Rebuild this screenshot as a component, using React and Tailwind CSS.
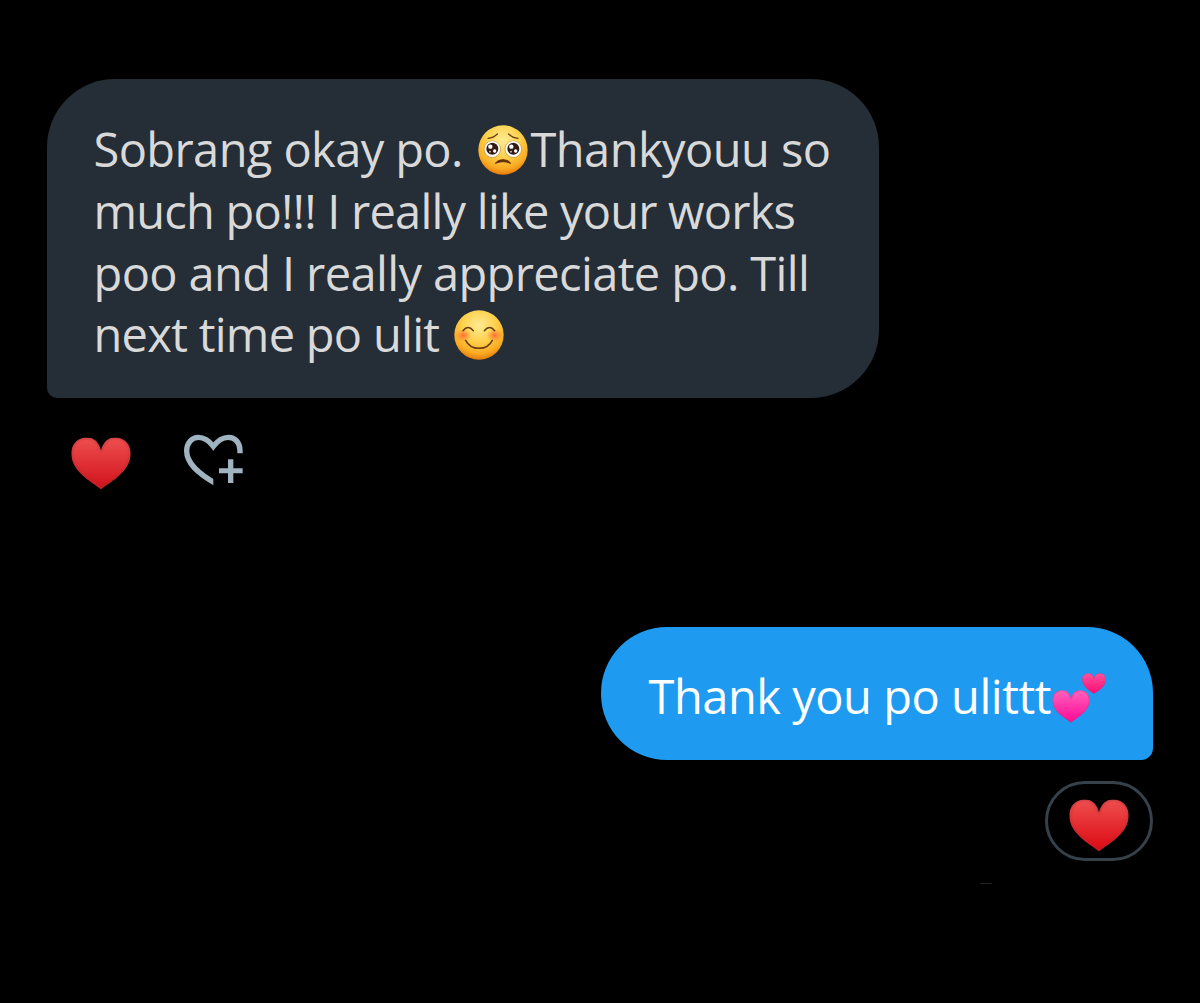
function Heart({ id, className, from, to, edge }) {
  return (
    <svg viewBox="0 0 180 158" className={className} aria-hidden="true">
      <defs>
        <linearGradient id={id} x1="0" y1="0" x2="0" y2="1">
          <stop offset="0" stopColor={from} />
          <stop offset="1" stopColor={to} />
        </linearGradient>
        <filter id={`${id}-soft`}>
          <feGaussianBlur stdDeviation="3" />
        </filter>
        <clipPath id={`${id}-clip`}>
          <path d="M90 157C72 138 1 108 1 48C1 21 21 1 47 1C69 1 84 15 90 40C96 15 111 1 133 1C159 1 179 21 179 48C179 108 108 138 90 157Z" />
        </clipPath>
      </defs>
      <g clipPath={`url(#${id}-clip)`}>
        <rect width="180" height="158" fill={`url(#${id})`} />
        <path
          d="M90 157C72 138 1 108 1 48C1 21 21 1 47 1C69 1 84 15 90 40C96 15 111 1 133 1C159 1 179 21 179 48C179 108 108 138 90 157Z"
          fill="none"
          stroke={edge}
          strokeWidth="7"
          opacity=".55"
          filter={`url(#${id}-soft)`}
        />
      </g>
    </svg>
  );
}

function FaceBase({ id }) {
  return (
    <>
      <defs>
        <radialGradient id={id} cx=".5" cy=".3" r=".7">
          <stop offset="0" stopColor="#ffeb94" />
          <stop offset=".5" stopColor="#fdd04a" />
          <stop offset=".82" stopColor="#f9aa22" />
          <stop offset="1" stopColor="#e67c0c" />
        </radialGradient>
        <radialGradient id={`${id}-blush`}>
          <stop offset="0" stopColor="#ff6a32" stopOpacity=".95" />
          <stop offset="1" stopColor="#ff7a32" stopOpacity="0" />
        </radialGradient>
      </defs>
      <circle cx="75" cy="75" r="74" fill={`url(#${id})`} />
    </>
  );
}

function PleadingFace({ className }) {
  return (
    <svg viewBox="0 0 150 150" className={className} aria-hidden="true">
      <FaceBase id="pleading" />
      <g fill="none" stroke="#65380f" strokeLinecap="round" strokeWidth="4">
        <path d="M30 40Q46 39 58 27" />
        <path d="M92 27Q104 39 120 40" />
      </g>
      {[43, 106].map((cx) => (
        <g key={cx}>
          <circle cx={cx} cy="73" r="25" fill="#f5dfa8" stroke="#b87b20" strokeWidth="1.5" />
          <circle cx={cx} cy="72" r="23" fill="#fff" />
          <circle cx={cx} cy="71" r="18" fill="#321b14" />
          <circle cx={cx - 6} cy="65" r="6.5" fill="#fff" />
          <circle cx={cx + 7} cy="78" r="5" fill="#fff" />
          <circle cx={cx - 7} cy="80" r="2.5" fill="#e5d5c9" />
        </g>
      ))}
      <path d="M52 115Q58 104 75 104Q92 104 98 115Q85 110 75 110Q65 110 52 115Z" fill="#65300d" stroke="#65300d" strokeWidth="3" strokeLinejoin="round" />
    </svg>
  );
}

function SmilingFace({ className }) {
  return (
    <svg viewBox="0 0 150 150" className={className} aria-hidden="true">
      <FaceBase id="smiling" />
      <ellipse cx="28" cy="76" rx="25" ry="20" fill="url(#smiling-blush)" />
      <ellipse cx="122" cy="76" rx="25" ry="20" fill="url(#smiling-blush)" />
      <g fill="none" stroke="#65380f" strokeLinecap="round" strokeWidth="4.5">
        <path d="M27 62Q42 43 58 62" />
        <path d="M91 62Q107 43 122 62" />
        <path d="M35 91Q47 115 75 115Q103 115 115 91" />
      </g>
    </svg>
  );
}

function AddReactionIcon({ className }) {
  return (
    <svg viewBox="0 0 177 156" className={className} aria-hidden="true">
      <clipPath id="heart-cut">
        <path d="M0 0H177V70H88V156H0Z" />
      </clipPath>
      <path
        d="M168 58V50C168 25 153 10 133 10C114 10 100 21 88 37C76 21 62 10 43 10C23 10 8 27 8 51C8 86 38 116 98 150"
        fill="none"
        stroke="#9fb3c1"
        strokeWidth="16"
        clipPath="url(#heart-cut)"
      />
      <path d="M105 103H132V76H148V103H176V118H148V147H132V118H105Z" fill="#9fb3c1" />
    </svg>
  );
}

function IncomingMessage() {
  return (
    <div className="mt-[79px] ml-[47px] h-[319px] w-[832px] rounded-[68px] rounded-bl-[10px] bg-[#252e36] pt-[40px] pl-[46.5px] text-[47px] leading-[61.8px] whitespace-pre text-[#d9d9d9]">
      <div className="flex h-[61.8px] items-center">
        <span className="w-[384px] tracking-[-0.6px]">Sobrang okay po.</span>
        <PleadingFace className="h-[50px] w-[50px] shrink-0" />
        <span className="ml-[3px] tracking-[-0.55px]">Thankyouu so</span>
      </div>
      <div className="h-[61.8px] tracking-[-0.78px]">much po!!! I really like your works</div>
      <div className="h-[61.8px] tracking-[-0.62px]">poo and I really appreciate po. Till</div>
      <div className="flex h-[61.8px] items-center">
        <span className="w-[360.5px] tracking-[-0.72px]">next time po ulit</span>
        <SmilingFace className="h-[50px] w-[50px] shrink-0" />
      </div>
    </div>
  );
}

function OutgoingMessage() {
  return (
    <div className="mt-[137px] mr-[47px] flex h-[133px] w-[552px] self-end rounded-[66px] rounded-br-[12px] bg-[#1e9bf0] pt-[39px] pl-[47.5px] text-[47px] leading-[61.8px] whitespace-pre text-white">
      <span className="w-[403px] tracking-[-0.47px]">Thank you po ulittt</span>
      <div className="flex h-[50px] w-[55px] items-start pt-[6.5px]">
        <Heart id="pink-large" className="mt-[17px] h-[33px] w-[38px] shrink-0" from="#ff62bd" to="#ff0795" edge="#c9347b" />
        <Heart id="pink-small" className="-ml-[8px] h-[21px] w-[24px] shrink-0" from="#ff559f" to="#ff0873" edge="#b8266c" />
      </div>
    </div>
  );
}

export default function App() {
  return (
    <main className="flex h-[1003px] w-[1200px] flex-col overflow-hidden bg-black font-['Open_Sans',sans-serif]">
      <IncomingMessage />
      <div className="mt-[36px] ml-[71px] flex h-[56px] items-start">
        <Heart id="red-left" className="mt-[3px] h-[53px] w-[60px]" from="#ee5050" to="#d0101a" edge="#a83338" />
        <AddReactionIcon className="ml-[53px] h-[52px] w-[59px]" />
      </div>
      <OutgoingMessage />
      <div className="mt-[21px] mr-[47px] flex h-[80px] w-[108px] justify-center self-end rounded-full border-[3px] border-[#364149] pt-[15px]">
        <Heart id="red-right" className="h-[53px] w-[60px] shrink-0" from="#ee5050" to="#dc0711" edge="#a83338" />
      </div>
      <div className="mt-[22px] ml-[980px] h-px w-[12px] rounded-full bg-[#222]" />
    </main>
  );
}
